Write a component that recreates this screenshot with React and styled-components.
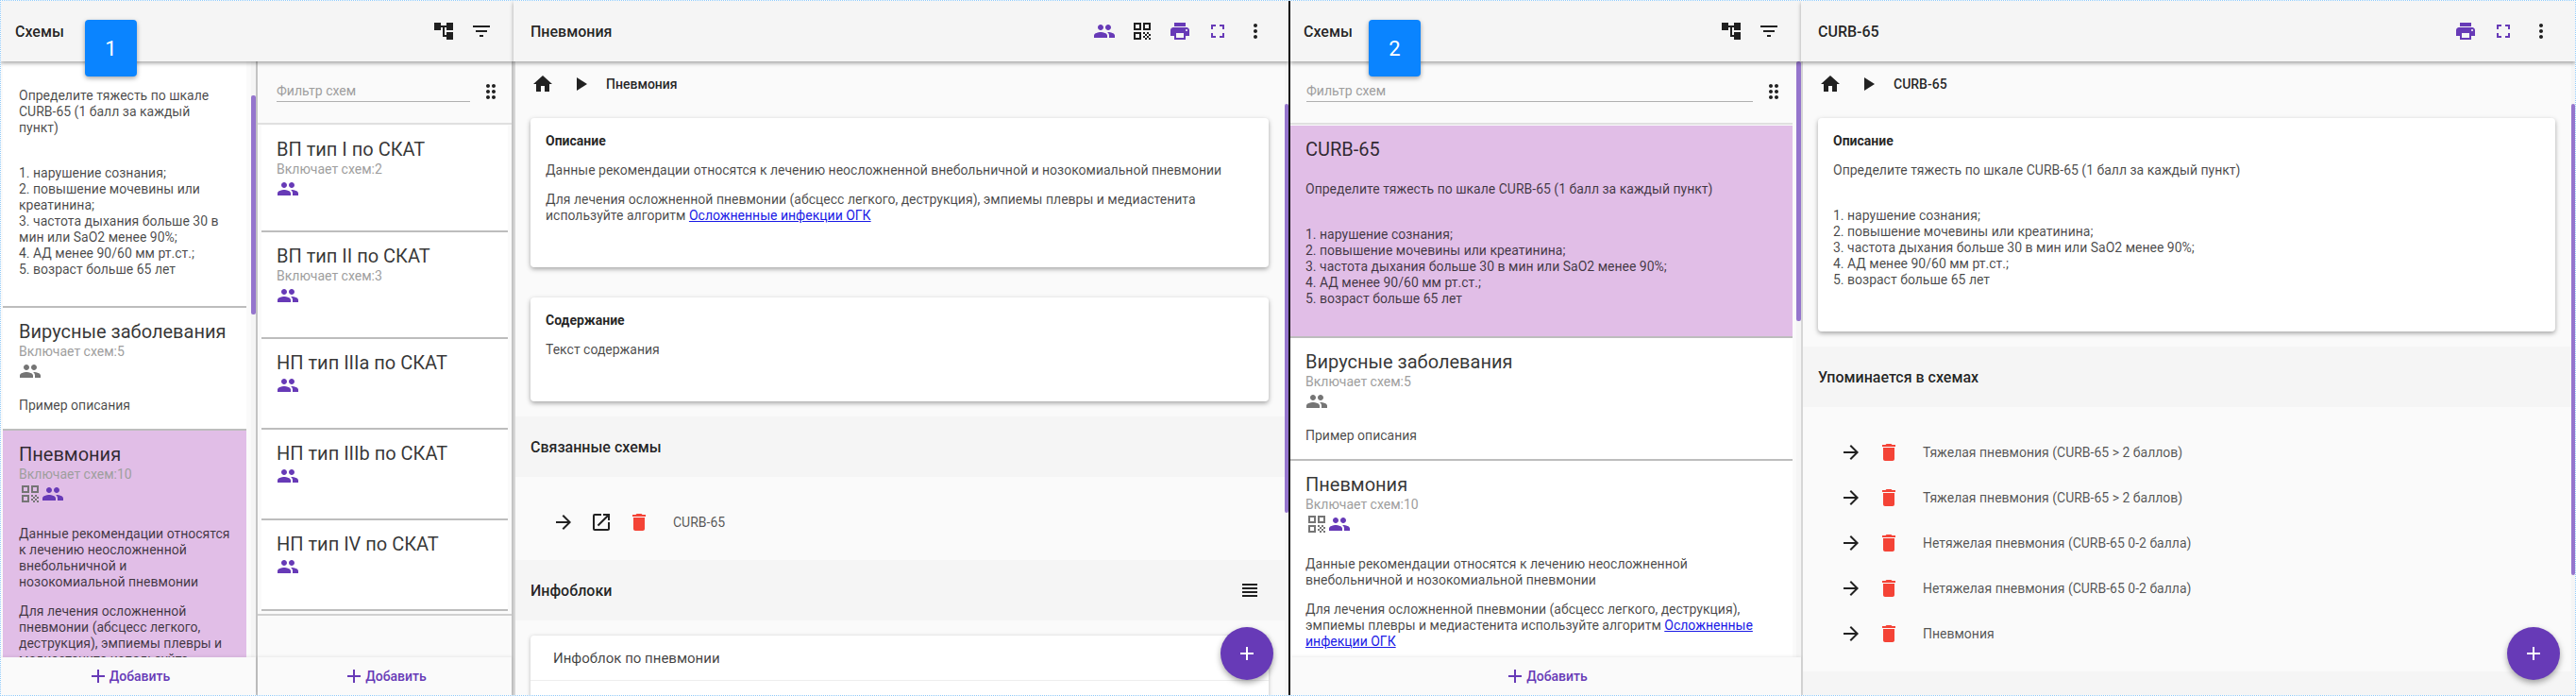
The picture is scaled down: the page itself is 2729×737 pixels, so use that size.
import React from 'react';
import styled, { createGlobalStyle } from 'styled-components';
import {
  MdAccountTree,
  MdAdd,
  MdArrowForward,
  MdDelete,
  MdDragIndicator,
  MdFilterList,
  MdFullscreen,
  MdHome,
  MdMoreVert,
  MdOpenInNew,
  MdPeople,
  MdPlayArrow,
  MdPrint,
  MdQrCode,
  MdViewHeadline,
} from 'react-icons/md';

const PURPLE = '#673ab7';

const GlobalStyle = createGlobalStyle`
  html, body {
    margin: 0;
    padding: 0;
    background: #fff;
    overflow: hidden;
  }
  body, input {
    font-family: Roboto, "Liberation Sans", sans-serif;
    font-size: 14px;
  }
  * {
    box-sizing: border-box;
  }
`;

const Page = styled.div`
  display: flex;
  width: 2729px;
  height: 737px;
  border: 1px dotted #90caf9;
  overflow: hidden;
`;

const Pane = styled.div`
  position: relative;
  display: flex;
  flex: 0 0 ${(p) => p.$width}px;
  height: 100%;
  min-width: 0;
`;

const Divider = styled.div`
  flex: 0 0 2px;
  background: #111;
`;

const Sidebar = styled.div`
  display: flex;
  flex-direction: column;
  flex: 0 0 ${(p) => p.$width}px;
  min-width: 0;
`;

const Header = styled.header`
  position: relative;
  z-index: 2;
  display: flex;
  align-items: center;
  flex: 0 0 64px;
  padding: 0 ${(p) => p.$right}px 0 ${(p) => p.$left}px;
  background: #f5f5f5;
  box-shadow: 0 2px 4px rgba(0, 0, 0, 0.35);
`;

const HeaderTitle = styled.div`
  flex: 1;
  font-size: 16px;
  font-weight: 500;
  color: rgba(0, 0, 0, 0.87);
`;

const IconBox = styled.span`
  display: flex;
  align-items: center;
  justify-content: center;
  flex: 0 0 40px;
  height: 40px;
  font-size: ${(p) => p.$size || 24}px;
  color: ${(p) => p.$color || 'rgba(0, 0, 0, 0.87)'};
`;

const Badge = styled.div`
  position: absolute;
  top: 20px;
  left: ${(p) => p.$left}px;
  z-index: 5;
  display: flex;
  align-items: center;
  justify-content: center;
  width: 55px;
  height: 60px;
  border-radius: 4px;
  background: #0a84ff;
  color: #fff;
  font-size: 22px;
  box-shadow: 0 2px 5px rgba(0, 0, 0, 0.35);
`;

const SideBody = styled.div`
  display: flex;
  flex: 1;
  min-height: 0;
`;

const Column = styled.div`
  display: flex;
  flex-direction: column;
  flex: ${(p) => (p.$width ? `0 0 ${p.$width}px` : '1')};
  min-width: 0;
  border-right: ${(p) => (p.$divided ? '2px solid #c4c4c4' : 'none')};
  background: #fafafa;
`;

const ColumnMain = styled.div`
  display: flex;
  flex: 1;
  min-height: 0;
`;

const ColumnScroll = styled.div`
  flex: 1;
  min-width: 0;
  margin-left: ${(p) => p.$inset || 0}px;
  overflow: hidden;
`;

const Gutter = styled.div`
  flex: 0 0 ${(p) => p.$width || 4}px;
  padding-top: ${(p) => p.$top || 0}px;
  margin-left: ${(p) => p.$gap || 0}px;
  background: #f5f5f5;
`;

const Thumb = styled.div`
  width: 100%;
  height: ${(p) => p.$height}px;
  border-radius: 2px;
  background: #9575cd;
`;

const FilterBar = styled.div`
  display: flex;
  align-items: flex-start;
  height: 67px;
  padding: 19px ${(p) => p.$right}px 0 ${(p) => p.$left}px;
  background: #fafafa;
  border-bottom: 2px solid #e0e0e0;
`;

const FilterInput = styled.input`
  flex: 1;
  min-width: 0;
  height: 24px;
  margin-right: 10px;
  padding: 0;
  border: 0;
  border-bottom: 1px solid #b0b0b0;
  background: transparent;
  outline: none;
  color: #9e9e9e;
  &::placeholder {
    color: #9e9e9e;
    opacity: 1;
  }
`;

const FilterIcon = styled.span`
  display: flex;
  margin-top: 1px;
  font-size: 24px;
  color: #212121;
`;

const CardStack = styled.div`
  padding: 1px ${(p) => p.$side}px ${(p) => (p.$closed ? 3 : 0)}px;
  border-bottom: ${(p) => (p.$closed ? '2px solid #d0d0d0' : 'none')};
`;

const SchemeItem = styled.div`
  padding: ${(p) => p.$top ?? 13}px 16px ${(p) => p.$bottom ?? 2}px ${(p) => p.$left ?? 17}px;
  background: ${(p) => (p.$active ? '#e1bee7' : '#fff')};
  border-bottom: 2px solid #bdbdbd;
  min-height: ${(p) => p.$minHeight || 0}px;
`;

const SchemeTitle = styled.div`
  font-size: 20px;
  line-height: 24px;
  color: rgba(0, 0, 0, 0.8);
`;

const SchemeMeta = styled.div`
  font-size: 14px;
  line-height: 18px;
  color: #9e9e9e;
`;

const SchemeIcons = styled.div`
  display: flex;
  height: ${(p) => (p.$tall ? 30 : 24)}px;
  font-size: 24px;
  color: ${(p) => p.$color || PURPLE};
`;

const GreyIcon = styled.span`
  display: flex;
  color: #757575;
`;

const PurpleIcon = styled.span`
  display: flex;
  color: ${PURPLE};
`;

const SchemeDesc = styled.div`
  padding-top: ${(p) => p.$top}px;
  font-size: 14px;
  line-height: 17px;
  color: rgba(0, 0, 0, 0.72);
  p {
    margin: 14px 0;
    white-space: pre-line;
  }
`;

const Footer = styled.div`
  display: flex;
  align-items: center;
  justify-content: center;
  flex: 0 0 40px;
  position: relative;
  z-index: 1;
  background: #fafafa;
  color: ${PURPLE};
  font-size: 14px;
  font-weight: 500;
  box-shadow: 0 -1px 3px rgba(0, 0, 0, 0.08);
  svg {
    font-size: 24px;
  }
`;

const Detail = styled.div`
  position: relative;
  display: flex;
  flex-direction: column;
  flex: 1;
  min-width: 0;
`;

const DetailBody = styled.div`
  display: flex;
  flex: 1;
  min-height: 0;
  border-left: 2px solid #d6d6d6;
  background: #fafafa;
`;

const DetailScroll = styled.div`
  flex: 1;
  min-width: 0;
  overflow: hidden;
`;

const Crumbs = styled.div`
  display: flex;
  align-items: center;
  height: 48px;
  padding-left: 9px;
  font-weight: 500;
  color: rgba(0, 0, 0, 0.87);
`;

const CrumbLabel = styled.span`
  margin-left: 7px;
`;

const Cards = styled.div`
  display: flex;
  flex-direction: column;
  gap: 32px;
  padding: 12px 17px 16px 16px;
`;

const Card = styled.section`
  padding: 16px 16px 32px;
  background: #fff;
  border-radius: 4px;
  box-shadow: 0 2px 5px rgba(0, 0, 0, 0.35);
  line-height: 17px;
  color: rgba(0, 0, 0, 0.72);
  p {
    margin: 14px 0;
    white-space: pre-line;
  }
`;

const CardTitle = styled.div`
  font-weight: 700;
  color: rgba(0, 0, 0, 0.87);
`;

const Link = styled.a`
  color: #1a1ae6;
  text-decoration: underline;
`;

const SectionHead = styled.div`
  display: flex;
  align-items: center;
  justify-content: space-between;
  height: 64px;
  padding: 0 17px 0 16px;
  background: #f5f5f5;
  font-size: 16px;
  font-weight: 500;
  color: rgba(0, 0, 0, 0.87);
`;

const RefList = styled.div`
  padding: 24px 0 16px 31px;
  background: #fafafa;
`;

const RefRow = styled.div`
  display: flex;
  align-items: center;
  height: 48px;
  color: rgba(0, 0, 0, 0.68);
`;

const RefLabel = styled.span`
  margin-left: 16px;
`;

const Accordion = styled.div`
  margin: 16px 17px 0 16px;
  background: #fff;
  border-radius: 4px 4px 0 0;
  box-shadow: 0 1px 4px rgba(0, 0, 0, 0.25);
`;

const AccordionRow = styled.div`
  display: flex;
  align-items: center;
  height: 48px;
  padding-left: 24px;
  font-size: 15px;
  color: rgba(0, 0, 0, 0.75);
  border-bottom: 1px solid #eee;
`;

const AccordionBody = styled.div`
  height: 40px;
`;

const TailBlock = styled.div`
  height: 40px;
  background: #f5f5f5;
`;

const Fab = styled.button`
  position: absolute;
  right: 16px;
  bottom: 16px;
  z-index: 4;
  display: flex;
  align-items: center;
  justify-content: center;
  width: 56px;
  height: 56px;
  padding: 0;
  border: 0;
  border-radius: 50%;
  background: ${PURPLE};
  color: #fff;
  font-size: 24px;
  box-shadow: 0 3px 6px rgba(0, 0, 0, 0.35);
`;

const CURB_TEXT = 'Определите тяжесть по шкале CURB-65 (1 балл за каждый пункт)';
const CURB_LIST =
  '\n1. нарушение сознания;\n2. повышение мочевины или креатинина;\n3. частота дыхания больше 30 в мин или SaO2 менее 90%;\n4. АД менее 90/60 мм рт.ст.;\n5. возраст больше 65 лет';
const PNEUMO_TEXT = 'Данные рекомендации относятся к лечению неосложненной внебольничной и нозокомиальной пневмонии';
const PNEUMO_TEXT_2 = 'Для лечения осложненной пневмонии (абсцесс легкого, деструкция), эмпиемы плевры и медиастенита используйте алгоритм ';
const LINK_TEXT = 'Осложненные инфекции ОГК';

const subSchemes = [
  { name: 'ВП тип I по СКАТ', count: 2 },
  { name: 'ВП тип II по СКАТ', count: 3 },
  { name: 'НП тип IIIa по СКАТ' },
  { name: 'НП тип IIIb по СКАТ' },
  { name: 'НП тип IV по СКАТ' },
];

const mentions = [
  'Тяжелая пневмония (CURB-65 > 2 баллов)',
  'Тяжелая пневмония (CURB-65 > 2 баллов)',
  'Нетяжелая пневмония (CURB-65 0-2 балла)',
  'Нетяжелая пневмония (CURB-65 0-2 балла)',
  'Пневмония',
];

const AddButton = () => (
  <Footer>
    <MdAdd />
    Добавить
  </Footer>
);

const SidebarHeader = ({ left, right }) => (
  <Header $left={left} $right={right}>
    <HeaderTitle>Схемы</HeaderTitle>
    <IconBox><MdAccountTree /></IconBox>
    <IconBox><MdFilterList /></IconBox>
  </Header>
);

const Filter = ({ left, right }) => (
  <FilterBar $left={left} $right={right}>
    <FilterInput placeholder="Фильтр схем" readOnly />
    <FilterIcon><MdDragIndicator /></FilterIcon>
  </FilterBar>
);

const Crumb = ({ label }) => (
  <Crumbs>
    <IconBox><MdHome /></IconBox>
    <IconBox><MdPlayArrow /></IconBox>
    <CrumbLabel>{label}</CrumbLabel>
  </Crumbs>
);

const PneumoDesc = () => (
  <SchemeDesc $top={2}>
    <p>{PNEUMO_TEXT}</p>
    <p>
      {PNEUMO_TEXT_2}
      <Link href="#">{LINK_TEXT}</Link>
    </p>
  </SchemeDesc>
);

const VirusItem = ({ left }) => (
  <SchemeItem $left={left}>
    <SchemeTitle>Вирусные заболевания</SchemeTitle>
    <SchemeMeta>Включает схем:5</SchemeMeta>
    <SchemeIcons><GreyIcon><MdPeople /></GreyIcon></SchemeIcons>
    <SchemeDesc $top={2}><p>Пример описания</p></SchemeDesc>
  </SchemeItem>
);

const PneumoHead = () => (
  <>
    <SchemeTitle>Пневмония</SchemeTitle>
    <SchemeMeta>Включает схем:10</SchemeMeta>
    <SchemeIcons $tall>
      <GreyIcon><MdQrCode /></GreyIcon>
      <PurpleIcon><MdPeople /></PurpleIcon>
    </SchemeIcons>
  </>
);

const FirstPane = () => (
  <Pane $width={1364}>
    <Badge $left={89}>1</Badge>
    <Sidebar $width={543}>
      <SidebarHeader left={15} right={14} />
      <SideBody>
        <Column $width={272} $divided>
          <ColumnMain>
            <ColumnScroll $inset={2}>
              <SchemeItem $left={17} $top={14} $bottom={16}>
                <SchemeDesc $top={0}>
                  <p>{CURB_TEXT}</p>
                  <p>{CURB_LIST}</p>
                </SchemeDesc>
              </SchemeItem>
              <VirusItem left={17} />
              <SchemeItem $active $left={17}>
                <PneumoHead />
                <PneumoDesc />
              </SchemeItem>
            </ColumnScroll>
            <Gutter $width={5} $gap={5} $top={36}><Thumb $height={232} /></Gutter>
          </ColumnMain>
          <AddButton />
        </Column>
        <Column $width={271} $divided>
          <ColumnMain>
            <ColumnScroll>
              <Filter left={20} right={10} />
              <CardStack $side={4} $closed>
                {subSchemes.map((s) => (
                  <SchemeItem key={s.name} $left={16} $minHeight={s.count ? 113 : 96}>
                    <SchemeTitle>{s.name}</SchemeTitle>
                    {s.count && <SchemeMeta>Включает схем:{s.count}</SchemeMeta>}
                    <SchemeIcons><PurpleIcon><MdPeople /></PurpleIcon></SchemeIcons>
                  </SchemeItem>
                ))}
              </CardStack>
            </ColumnScroll>
          </ColumnMain>
          <AddButton />
        </Column>
      </SideBody>
    </Sidebar>
    <Detail>
      <Header $left={18} $right={15}>
        <HeaderTitle>Пневмония</HeaderTitle>
        <IconBox $color={PURPLE}><MdPeople /></IconBox>
        <IconBox><MdQrCode /></IconBox>
        <IconBox $color={PURPLE}><MdPrint /></IconBox>
        <IconBox $color={PURPLE}><MdFullscreen /></IconBox>
        <IconBox><MdMoreVert /></IconBox>
      </Header>
      <DetailBody>
        <DetailScroll>
          <Crumb label="Пневмония" />
          <Cards>
            <Card>
              <CardTitle>Описание</CardTitle>
              <p>{PNEUMO_TEXT}</p>
              <p>
                {PNEUMO_TEXT_2}
                <Link href="#">{LINK_TEXT}</Link>
              </p>
            </Card>
            <Card>
              <CardTitle>Содержание</CardTitle>
              <p>Текст содержания</p>
            </Card>
          </Cards>
          <SectionHead>Связанные схемы</SectionHead>
          <RefList>
            <RefRow>
              <IconBox><MdArrowForward /></IconBox>
              <IconBox><MdOpenInNew /></IconBox>
              <IconBox $color="#f44336"><MdDelete /></IconBox>
              <RefLabel>CURB-65</RefLabel>
            </RefRow>
          </RefList>
          <SectionHead>
            Инфоблоки
            <IconBox><MdViewHeadline /></IconBox>
          </SectionHead>
          <Accordion>
            <AccordionRow>Инфоблок по пневмонии</AccordionRow>
            <AccordionBody />
          </Accordion>
        </DetailScroll>
        <Gutter $top={45}><Thumb $height={433} /></Gutter>
      </DetailBody>
      <Fab><MdAdd /></Fab>
    </Detail>
  </Pane>
);

const SecondPane = () => (
  <Pane $width={1361}>
    <Badge $left={83}>2</Badge>
    <Sidebar $width={541}>
      <SidebarHeader left={14} right={14} />
      <SideBody>
        <Column>
          <ColumnMain>
            <ColumnScroll>
              <Filter left={17} right={8} />
              <CardStack $side={0}>
                <SchemeItem $active $left={16} $bottom={17}>
                  <SchemeTitle>CURB-65</SchemeTitle>
                  <SchemeDesc $top={8}>
                    <p>{CURB_TEXT}</p>
                    <p>{CURB_LIST}</p>
                  </SchemeDesc>
                </SchemeItem>
                <VirusItem left={16} />
                <SchemeItem $left={16}>
                  <PneumoHead />
                  <PneumoDesc />
                </SchemeItem>
              </CardStack>
            </ColumnScroll>
            <Gutter $width={5} $gap={4}><Thumb $height={275} /></Gutter>
          </ColumnMain>
          <AddButton />
        </Column>
      </SideBody>
    </Sidebar>
    <Detail>
      <Header $left={18} $right={16}>
        <HeaderTitle>CURB-65</HeaderTitle>
        <IconBox $color={PURPLE}><MdPrint /></IconBox>
        <IconBox $color={PURPLE}><MdFullscreen /></IconBox>
        <IconBox><MdMoreVert /></IconBox>
      </Header>
      <DetailBody>
        <DetailScroll>
          <Crumb label="CURB-65" />
          <Cards>
            <Card>
              <CardTitle>Описание</CardTitle>
              <p>{CURB_TEXT}</p>
              <p>{CURB_LIST}</p>
            </Card>
          </Cards>
          <SectionHead>Упоминается в схемах</SectionHead>
          <RefList>
            {mentions.map((name, i) => (
              <RefRow key={i}>
                <IconBox><MdArrowForward /></IconBox>
                <IconBox $color="#f44336"><MdDelete /></IconBox>
                <RefLabel>{name}</RefLabel>
              </RefRow>
            ))}
          </RefList>
          <TailBlock />
        </DetailScroll>
        <Gutter $top={45}><Thumb $height={499} /></Gutter>
      </DetailBody>
      <Fab><MdAdd /></Fab>
    </Detail>
  </Pane>
);

const App = () => (
  <>
    <GlobalStyle />
    <Page>
      <FirstPane />
      <Divider />
      <SecondPane />
    </Page>
  </>
);

export default App;
